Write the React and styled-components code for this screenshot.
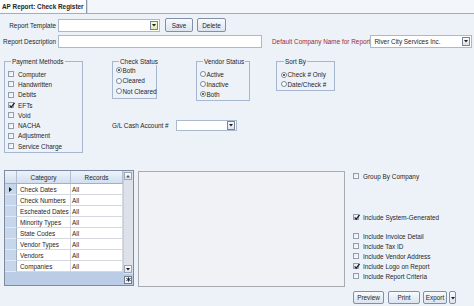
import React from "react";
import styled, { createGlobalStyle } from "styled-components";

const GlobalStyle = createGlobalStyle`
  html, body {
    margin: 0;
    padding: 0;
    background: #edf2f9;
  }
  body {
    font-family: "Liberation Sans", Arial, sans-serif;
  }
`;

const Window = styled.div`
  width: 474px;
  height: 306px;
  overflow: hidden;
  background: #edf2f9;
  color: #262626;
  font-size: 6.4px;
  display: flex;
  flex-direction: column;
`;

const TabStrip = styled.div`
  height: 13px;
  flex: none;
  display: flex;
  background: #f3f6fb;
  border-bottom: 1px solid #a3adbb;
`;

const Tab = styled.div`
  width: 84px;
  padding-left: 2px;
  line-height: 13px;
  font-weight: bold;
  white-space: nowrap;
  background: linear-gradient(#ffffff, #f7f9fc);
  border-right: 1px solid #8d99aa;
  box-shadow: 1px 0 0 #d4dbe5;
`;

const Form = styled.div`
  padding: 4px 2px 0 3px;
  display: flex;
  flex-direction: column;
`;

const FieldRow = styled.div`
  display: flex;
  align-items: center;
  height: ${(p) => p.$h || 14}px;
  margin-top: ${(p) => p.$gap || 0}px;
`;

const FieldLabel = styled.span`
  width: ${(p) => p.$w || 53}px;
  margin-right: 2px;
  text-align: ${(p) => (p.$left ? "left" : "right")};
  white-space: nowrap;
  flex: none;
`;

const AccentLabel = styled.span`
  margin-left: 10px;
  color: #a3272b;
  white-space: nowrap;
`;

const TextBox = styled.div`
  width: ${(p) => p.$w}px;
  height: ${(p) => p.$h || 13}px;
  box-sizing: border-box;
  border: 1px solid #abb9cc;
  background: #fff;
  display: flex;
  align-items: center;
  justify-content: space-between;
  padding-left: 3px;
  margin-left: ${(p) => (p.$push ? "auto" : "0")};
  flex: none;
  white-space: nowrap;
`;

const ComboArrow = styled.span`
  width: 8px;
  height: 9px;
  box-sizing: border-box;
  margin-right: 1px;
  border: 1px solid #76849b;
  background: ${(p) =>
    p.$hot
      ? "linear-gradient(#f6f9d8, #e4ecae)"
      : "linear-gradient(#f7f9fc, #dfe5ee)"};
  display: flex;
  align-items: center;
  justify-content: center;
`;

const Button = styled.button`
  width: ${(p) => p.$w}px;
  height: ${(p) => p.$h || 14}px;
  margin: 0 0 0 ${(p) => p.$ml || 0}px;
  padding: 0;
  box-sizing: border-box;
  border: 1px solid #8190a6;
  border-radius: 2px;
  background: linear-gradient(#f8fafd, #dce4ef);
  font: inherit;
  color: #262626;
  flex: none;
`;

const GroupsRow = styled.div`
  display: flex;
  align-items: flex-start;
  margin-top: 10px;
  padding-left: 1px;
`;

const Group = styled.fieldset`
  margin: 0 0 0 ${(p) => p.$ml || 0}px;
  padding: 0 ${(p) => p.$px || 3}px ${(p) => p.$pb || 1}px;
  width: ${(p) => p.$w}px;
  box-sizing: border-box;
  min-width: 0;
  border: 1px solid #a7b7cf;
  flex: none;
`;

const Legend = styled.legend`
  padding: 0 1px;
  margin-left: 3px;
  line-height: 7px;
  font-size: 6.4px;
  white-space: nowrap;
`;

const ItemList = styled.div`
  display: flex;
  flex-direction: column;
  padding-top: ${(p) => p.$pt || 0}px;
`;

const Item = styled.div`
  height: ${(p) => p.$h || 10}px;
  display: flex;
  align-items: center;
  white-space: nowrap;
  margin-top: ${(p) => p.$gap || 0}px;
`;

const Box = styled.span`
  width: 6px;
  height: 6px;
  box-sizing: border-box;
  border: 1px solid #929eb0;
  background: linear-gradient(135deg, #e4e8ee, #ffffff);
  margin-right: 4px;
  flex: none;
  position: relative;
  svg {
    position: absolute;
    left: -1px;
    top: -2px;
  }
`;

const RadioDot = styled.span`
  width: 6px;
  height: 6px;
  box-sizing: border-box;
  border-radius: 50%;
  border: 1px solid #7e8a9c;
  background: radial-gradient(circle, #ffffff 55%, #e3e7ed);
  display: inline-flex;
  align-items: center;
  justify-content: center;
  margin-right: 0.5px;
  flex: none;
  &::after {
    content: "";
    width: 2px;
    height: 2px;
    border-radius: 50%;
    background: ${(p) => (p.$on ? "#2f2f2f" : "transparent")};
  }
`;

const MiddleColumn = styled.div`
  margin-left: 29px;
  display: flex;
  flex-direction: column;
`;

const TopGroups = styled.div`
  display: flex;
  align-items: flex-start;
`;

const BottomRow = styled.div`
  display: flex;
  align-items: flex-start;
  margin-top: 17px;
  padding-left: 1px;
`;

const Grid = styled.div`
  width: 130px;
  height: 116px;
  box-sizing: border-box;
  border: 1px solid #7d8ba1;
  display: flex;
  background: #bacce6;
  flex: none;
`;

const GridBody = styled.div`
  display: grid;
  grid-template-columns: 12px 54px 52px;
  grid-template-rows: 13px repeat(8, 11px);
  align-content: start;
`;

const HeadCell = styled.div`
  background: linear-gradient(#eef3fa, #d2def0);
  border-right: 1px solid #b1bfd2;
  border-bottom: 1px solid #9fb0c8;
  display: flex;
  align-items: center;
  justify-content: center;
`;

const RowHead = styled.div`
  background: #c6d6eb;
  border-right: 1px solid #9fb0c8;
  border-bottom: 1px solid #e0e9f5;
  display: flex;
  align-items: center;
  justify-content: center;
`;

const Cell = styled.div`
  background: #fff;
  border-right: 1px solid #d5d9df;
  border-bottom: 1px solid #d5d9df;
  padding-left: ${(p) => p.$pl || 2}px;
  display: flex;
  align-items: center;
  white-space: nowrap;
  overflow: hidden;
`;

const ScrollColumn = styled.div`
  width: 10px;
  display: flex;
  flex-direction: column;
`;

const ScrollTrack = styled.div`
  flex: 1;
  background: #dde2ea;
  border-left: 1px solid #c8cfda;
  display: flex;
  flex-direction: column;
  justify-content: space-between;
  padding: 1px 0 1px 0;
`;

const ScrollButton = styled.div`
  height: 8px;
  margin: 0 1px 0 0;
  box-sizing: border-box;
  border: 1px solid #9aa5b6;
  background: linear-gradient(#fafbfd, #e2e7ee);
  display: flex;
  align-items: center;
  justify-content: center;
`;

const StarCell = styled.div`
  height: 11px;
  display: flex;
  align-items: center;
  padding-left: 1px;
`;

const StarButton = styled.div`
  width: 8px;
  height: 8px;
  box-sizing: border-box;
  border: 1px solid #6f7d92;
  background: #f4f6f9;
  display: flex;
  align-items: center;
  justify-content: center;
`;

const Preview = styled.div`
  width: 207px;
  height: 116px;
  margin: 1px 0 0 4px;
  box-sizing: border-box;
  border: 1px solid #a6abb4;
  background: #f0f2f6;
  flex: none;
`;

const Options = styled.div`
  margin: 1px 0 0 8px;
  display: flex;
  flex-direction: column;
`;

const ButtonRow = styled.div`
  display: flex;
  margin-top: 10px;
`;

const DownTriangle = () => (
  <svg width="4" height="3" viewBox="0 0 4 3">
    <polygon points="0,0 4,0 2,2.6" fill="#1e1e1e" />
  </svg>
);

const UpTriangle = ({ color = "#4b5563" }) => (
  <svg width="4" height="3" viewBox="0 0 4 3">
    <polygon points="0,2.6 4,2.6 2,0" fill={color} />
  </svg>
);

const Check = () => (
  <svg width="8" height="8" viewBox="0 0 8 8">
    <path d="M1.6 4.4 L3.2 6.2 L6.6 1.8" fill="none" stroke="#1f1f1f" strokeWidth="1.3" />
  </svg>
);

const Checkbox = ({ label, checked, h, gap }) => (
  <Item $h={h} $gap={gap}>
    <Box>{checked && <Check />}</Box>
    {label}
  </Item>
);

const Radio = ({ label, on, h }) => (
  <Item $h={h}>
    <RadioDot $on={on} />
    {label}
  </Item>
);

const Combo = ({ w, h, text, hot, push }) => (
  <TextBox $w={w} $h={h} $push={push}>
    <span>{text}</span>
    <ComboArrow $hot={hot}>
      <DownTriangle />
    </ComboArrow>
  </TextBox>
);

const paymentMethods = [
  ["Computer", false],
  ["Handwritten", false],
  ["Debits", false],
  ["EFTs", true],
  ["Void", false],
  ["NACHA", false],
  ["Adjustment", false],
  ["Service Charge", false],
];

const categories = [
  "Check Dates",
  "Check Numbers",
  "Escheated Dates",
  "Minority Types",
  "State Codes",
  "Vendor Types",
  "Vendors",
  "Companies",
];

const includes = [
  ["Include Invoice Detail", false],
  ["Include Tax ID", false],
  ["Include Vendor Address", false],
  ["Include Logo on Report", true],
  ["Include Report Criteria", false],
];

export default function App() {
  return (
    <Window>
      <GlobalStyle />
      <TabStrip>
        <Tab>AP Report: Check Register</Tab>
      </TabStrip>

      <Form>
        <FieldRow>
          <FieldLabel>Report Template</FieldLabel>
          <Combo w={102} hot />
          <Button $w={28} $ml={5}>Save</Button>
          <Button $w={29} $ml={4}>Delete</Button>
        </FieldRow>

        <FieldRow $gap={2}>
          <FieldLabel>Report Description</FieldLabel>
          <TextBox $w={204} />
          <AccentLabel>Default Company Name for Report</AccentLabel>
          <Combo w={102} text="River City Services Inc." push />
        </FieldRow>

        <GroupsRow>
          <Group $w={79} $pb={1}>
            <Legend>Payment Methods</Legend>
            <ItemList $pt={4}>
              {paymentMethods.map(([label, checked]) => (
                <Checkbox key={label} label={label} checked={checked} h={10.3} />
              ))}
            </ItemList>
          </Group>

          <MiddleColumn>
            <TopGroups>
              <Group $w={45} $px={0} $pb={1}>
                <Legend>Check Status</Legend>
                <ItemList>
                  <Radio label="Both" on h={10.5} />
                  <Radio label="Cleared" h={10.5} />
                  <Radio label="Not Cleared" h={10.5} />
                </ItemList>
              </Group>

              <Group $w={54} $ml={39} $px={3} $pb={0}>
                <Legend>Vendor Status</Legend>
                <ItemList $pt={4}>
                  <Radio label="Active" />
                  <Radio label="Inactive" />
                  <Radio label="Both" on />
                </ItemList>
              </Group>

              <Group $w={59} $ml={26} $px={4} $pb={0}>
                <Legend>Sort By</Legend>
                <ItemList $pt={5}>
                  <Radio label="Check # Only" on h={9.5} />
                  <Radio label="Date/Check #" h={9.5} />
                </ItemList>
              </Group>
            </TopGroups>

            <FieldRow $h={12} $gap={18}>
              <FieldLabel $w={62} $left>G/L Cash Account #</FieldLabel>
              <Combo w={61} h={11} />
            </FieldRow>
          </MiddleColumn>
        </GroupsRow>

        <BottomRow>
          <Grid>
            <GridBody>
              <HeadCell />
              <HeadCell>Category</HeadCell>
              <HeadCell>Records</HeadCell>
              {categories.map((name, i) => (
                <React.Fragment key={name}>
                  <RowHead>
                    {i === 0 && (
                      <svg width="3" height="5" viewBox="0 0 3 5">
                        <polygon points="0,0 3,2.5 0,5" fill="#111" />
                      </svg>
                    )}
                  </RowHead>
                  <Cell $pl={3}>{name}</Cell>
                  <Cell $pl={1}>All</Cell>
                </React.Fragment>
              ))}
            </GridBody>
            <ScrollColumn>
              <ScrollTrack>
                <ScrollButton>
                  <UpTriangle />
                </ScrollButton>
                <ScrollButton>
                  <DownTriangle />
                </ScrollButton>
              </ScrollTrack>
              <StarCell>
                <StarButton>
                  <svg width="5" height="5" viewBox="0 0 5 5">
                    <path
                      d="M2.5 0.3 V4.7 M0.4 1.4 L4.6 3.6 M0.4 3.6 L4.6 1.4"
                      stroke="#1b1b1b"
                      strokeWidth="0.9"
                    />
                  </svg>
                </StarButton>
              </StarCell>
            </ScrollColumn>
          </Grid>

          <Preview />

          <Options>
            <Checkbox label="Group By Company" />
            <Checkbox label="Include System-Generated" checked gap={31} />
            <ItemList style={{ marginTop: 9 }}>
              {includes.map(([label, checked]) => (
                <Checkbox key={label} label={label} checked={checked} />
              ))}
            </ItemList>
            <ButtonRow>
              <Button $w={31} $h={13}>Preview</Button>
              <Button $w={32} $h={13} $ml={4}>Print</Button>
              <Button $w={24} $h={13} $ml={3}>Export</Button>
              <Button $w={7} $h={13} $ml={2}>
                <DownTriangle />
              </Button>
            </ButtonRow>
          </Options>
        </BottomRow>
      </Form>
    </Window>
  );
}
